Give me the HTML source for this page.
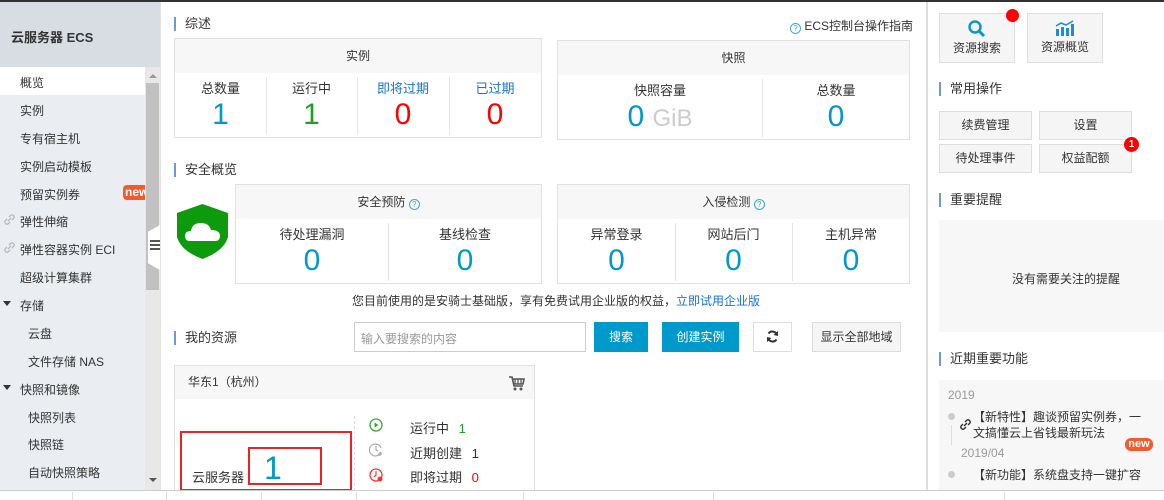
<!DOCTYPE html>
<html><head><meta charset="utf-8"><style>
*{margin:0;padding:0;box-sizing:border-box}
body{width:1164px;height:500px;overflow:hidden;background:#fff;font-family:"Liberation Sans","Noto Sans CJK SC",sans-serif;font-size:12px;color:#333;position:relative}
.a{position:absolute}
.t{position:absolute;white-space:nowrap}
.side{left:0;top:2px;width:160px;height:488px;background:#eaedf1}
.mi{position:absolute;left:20px;font-size:12px;color:#333}
.card{position:absolute;border:1px solid #e1e1e1;background:#fff}
.ch{position:absolute;left:0;right:0;top:0;height:34px;background:#f7f7f7;text-align:center;line-height:34px;color:#333}
.col{position:absolute;text-align:center}
.lab{font-size:13px;color:#333}
.num{font-size:30px;line-height:36px}
.vd{position:absolute;width:1px;background:#e5e5e5}
.sec{position:absolute;font-size:13px;color:#333;padding-left:9px;border-left:2px solid #6a9bd8;line-height:14px}
.btn{position:absolute;border:1px solid #ddd;background:#f5f5f5;text-align:center;color:#333}
.q{display:inline-block;width:11px;height:11px;border:1px solid #3da8d8;border-radius:50%;color:#3da8d8;font-size:8px;line-height:9px;text-align:center;vertical-align:-1px}
</style></head><body>
<div class="a" style="left:0;top:0;width:1164px;height:2px;background:#333"></div>
<div class="a side"></div>
<div class="a" style="left:0;top:2px;width:160px;height:65px;background:#d8dce3"></div>
<div class="t" style="left:11px;top:27px;font-size:13px;font-weight:bold;color:#333">云服务器 ECS</div>
<div class="a" style="left:0;top:67px;width:145px;height:28px;background:#fff"></div>
<div class="a" style="left:145px;top:67px;width:15px;height:423px;background:#e8e8e8"></div>
<div class="a" style="left:146px;top:83px;width:13px;height:207px;background:#c1c1c1"></div>
<div class="a" style="left:149px;top:74px;border:4px solid transparent;border-bottom:4px solid #999;border-top:0"></div>
<div class="a" style="left:149px;top:478px;border:4px solid transparent;border-top:4px solid #555;border-bottom:0"></div>
<div class="a" style="left:148px;top:225px;width:12px;height:45px;background:#fff;clip-path:polygon(0 15%,100% 0,100% 100%,0 85%)"></div>
<div class="a" style="left:150px;top:240px;width:10px;height:2px;background:#555;box-shadow:0 4px 0 #555,0 8px 0 #555"></div>
<div class="mi" style="top:74px">概览</div>
<div class="mi" style="top:102px">实例</div>
<div class="mi" style="top:130px">专有宿主机</div>
<div class="mi" style="top:158px">实例启动模板</div>
<div class="mi" style="top:186px">预留实例券</div>
<div class="a" style="left:123px;top:185px;width:22px;height:15px;background:#f45a2a;border-radius:4px 0 0 4px;color:#fff;font-weight:bold;font-size:12px;line-height:15px;padding-left:2px;overflow:hidden">new</div>
<svg class="a" style="left:4px;top:214px" width="11" height="11" viewBox="0 0 11 11"><path d="M4 7 L7 4 M3 5 L1.5 6.5 Q0 8 1.5 9.5 Q3 11 4.5 9.5 L6 8 M5 3 L6.5 1.5 Q8 0 9.5 1.5 Q11 3 9.5 4.5 L8 6" stroke="#bbb" stroke-width="1.3" fill="none"/></svg>
<div class="mi" style="top:213px">弹性伸缩</div>
<svg class="a" style="left:4px;top:242px" width="11" height="11" viewBox="0 0 11 11"><path d="M4 7 L7 4 M3 5 L1.5 6.5 Q0 8 1.5 9.5 Q3 11 4.5 9.5 L6 8 M5 3 L6.5 1.5 Q8 0 9.5 1.5 Q11 3 9.5 4.5 L8 6" stroke="#bbb" stroke-width="1.3" fill="none"/></svg>
<div class="mi" style="top:241px">弹性容器实例 ECI</div>
<div class="mi" style="top:269px">超级计算集群</div>
<div class="a" style="left:3px;top:301px;border:4px solid transparent;border-top:5px solid #333;border-bottom:0"></div>
<div class="mi" style="top:297px">存储</div>
<div class="mi" style="left:28px;top:325px">云盘</div>
<div class="mi" style="left:28px;top:353px">文件存储 NAS</div>
<div class="a" style="left:3px;top:385px;border:4px solid transparent;border-top:5px solid #333;border-bottom:0"></div>
<div class="mi" style="top:381px">快照和镜像</div>
<div class="mi" style="left:28px;top:409px">快照列表</div>
<div class="mi" style="left:28px;top:436px">快照链</div>
<div class="mi" style="left:28px;top:464px">自动快照策略</div>

<div class="sec" style="left:174px;top:17px">综述</div>
<div class="t" style="left:790px;top:17px;font-size:12px"><span class="q">?</span> ECS控制台操作指南</div>
<div class="card" style="left:174px;top:38px;width:368px;height:100px">
 <div class="ch">实例</div>
 <div class="col" style="left:0;width:91px;top:39px"><div class="lab">总数量</div><div class="num" style="color:#0099cc">1</div></div>
 <div class="vd" style="left:91px;top:38px;height:58px"></div>
 <div class="col" style="left:91px;width:91px;top:39px"><div class="lab">运行中</div><div class="num" style="color:#229e2a">1</div></div>
 <div class="vd" style="left:182px;top:38px;height:58px"></div>
 <div class="col" style="left:182px;width:92px;top:39px"><div class="lab" style="color:#1a73cf">即将过期</div><div class="num" style="color:#f00">0</div></div>
 <div class="vd" style="left:274px;top:38px;height:58px"></div>
 <div class="col" style="left:274px;width:92px;top:39px"><div class="lab" style="color:#1a73cf">已过期</div><div class="num" style="color:#f00">0</div></div>
</div>
<div class="card" style="left:557px;top:40px;width:353px;height:100px">
 <div class="ch">快照</div>
 <div class="col" style="left:0;width:204px;top:39px"><div class="lab">快照容量</div><div class="num" style="color:#0099cc">0 <span style="color:#ccc;font-size:24px">GiB</span></div></div>
 <div class="vd" style="left:204px;top:38px;height:58px"></div>
 <div class="col" style="left:204px;width:148px;top:39px"><div class="lab">总数量</div><div class="num" style="color:#0099cc">0</div></div>
</div>

<div class="sec" style="left:174px;top:163px">安全概览</div>
<svg class="a" style="left:176px;top:203px" width="53" height="57" viewBox="0 0 53 57"><path d="M26.5 1 L52 10 L52 34 Q48 48 26.5 56 Q5 48 1 34 L1 10 Z" fill="#0d9a0d"/><path d="M14 38 Q9 38 9 33 Q9 28 15 28 Q16 20 25 20 Q33 20 35 27 Q44 27 44 33 Q44 38 39 38 Z" fill="#fff"/></svg>
<div class="card" style="left:235px;top:184px;width:307px;height:100px">
 <div class="ch">安全预防 <span class="q">?</span></div>
 <div class="col" style="left:0;width:152px;top:39px"><div class="lab">待处理漏洞</div><div class="num" style="color:#0099cc">0</div></div>
 <div class="vd" style="left:152px;top:38px;height:58px"></div>
 <div class="col" style="left:152px;width:154px;top:39px"><div class="lab">基线检查</div><div class="num" style="color:#0099cc">0</div></div>
</div>
<div class="card" style="left:557px;top:184px;width:353px;height:100px">
 <div class="ch">入侵检测 <span class="q">?</span></div>
 <div class="col" style="left:0;width:117px;top:39px"><div class="lab">异常登录</div><div class="num" style="color:#0099cc">0</div></div>
 <div class="vd" style="left:117px;top:38px;height:58px"></div>
 <div class="col" style="left:117px;width:117px;top:39px"><div class="lab">网站后门</div><div class="num" style="color:#0099cc">0</div></div>
 <div class="vd" style="left:234px;top:38px;height:58px"></div>
 <div class="col" style="left:234px;width:118px;top:39px"><div class="lab">主机异常</div><div class="num" style="color:#0099cc">0</div></div>
</div>
<div class="t" style="left:352px;top:292px;font-size:12px">您目前使用的是安骑士基础版，享有免费试用企业版的权益，<span style="color:#1a73cf">立即试用企业版</span></div>

<div class="sec" style="left:174px;top:331px">我的资源</div>
<div class="a" style="left:354px;top:322px;width:232px;height:30px;border:1px solid #ccc;color:#999;padding:7px 0 0 6px">输入要搜索的内容</div>
<div class="a" style="left:594px;top:322px;width:54px;height:30px;background:#0099cc;color:#fff;text-align:center;line-height:30px">搜索</div>
<div class="a" style="left:662px;top:322px;width:77px;height:30px;background:#0099cc;color:#fff;text-align:center;line-height:30px">创建实例</div>
<div class="a" style="left:753px;top:322px;width:39px;height:30px;border:1px solid #ddd"></div>
<svg class="a" style="left:766px;top:330px" width="13" height="13" viewBox="0 0 13 13"><path d="M11 5 A4.8 4.8 0 0 0 2.5 3.5 M2 8 A4.8 4.8 0 0 0 10.5 9.5" stroke="#333" stroke-width="2" fill="none"/><path d="M12 1 L12 6 L7.5 5 Z M1 12 L1 7 L5.5 8 Z" fill="#333"/></svg>
<div class="a" style="left:812px;top:322px;width:89px;height:30px;border:1px solid #ddd;background:#f5f5f5;text-align:center;line-height:28px">显示全部地域</div>

<div class="card" style="left:174px;top:365px;width:361px;height:130px;border-bottom:none">
 <div class="ch" style="height:33px;text-align:left;padding-left:13px;line-height:33px">华东1（杭州）</div>
 <svg class="a" style="left:334px;top:10px" width="16" height="15" viewBox="0 0 16 15"><path d="M0 1 L3 1 L5 10 L14 10 M3.5 3 L15 3 L14 8 L4.5 8" stroke="#555" stroke-width="1.6" fill="none"/><path d="M6 3 V8 M9 3 V8 M12 3 V8" stroke="#555" stroke-width="1.2"/><circle cx="6" cy="13" r="1.5" fill="#555"/><circle cx="12" cy="13" r="1.5" fill="#555"/></svg>
 <div class="a" style="left:179px;top:50px;width:1px;height:80px;border-left:1px dashed #ddd"></div>
</div>
<div class="a" style="left:180px;top:431px;width:172px;height:60px;border:2px solid #e22"></div>
<div class="a" style="left:248px;top:447px;width:74px;height:38px;border:2px solid #e22"></div>
<div class="t" style="left:192px;top:467px;font-size:13px">云服务器</div>
<div class="t" style="left:264px;top:448px;font-size:32px;color:#0099cc;line-height:40px">1</div>
<svg class="a" style="left:369px;top:418px" width="14" height="14" viewBox="0 0 14 14"><circle cx="7" cy="7" r="6" stroke="#3aa53a" stroke-width="1.3" fill="none"/><path d="M5.5 4.5 L9.5 7 L5.5 9.5 Z" fill="#3aa53a"/></svg>
<svg class="a" style="left:369px;top:443px" width="14" height="14" viewBox="0 0 14 14"><path d="M12 9 A6 6 0 1 1 12 5" stroke="#aaa" stroke-width="1.2" fill="none"/><path d="M7 3 V7 L9 8 M11 9 V13 M9 11 H13" stroke="#aaa" stroke-width="1.2" fill="none"/></svg>
<svg class="a" style="left:369px;top:468px" width="14" height="14" viewBox="0 0 14 14"><circle cx="7" cy="7" r="6" stroke="#f33" stroke-width="1.3" fill="none"/><path d="M7 3 V7 L5 9" stroke="#f33" stroke-width="1.2" fill="none"/><circle cx="11" cy="11" r="2.5" fill="#f33"/></svg>
<div class="t" style="left:410px;top:418px;font-size:13px">运行中 <span style="color:#229e2a;margin-left:6px">1</span></div>
<div class="t" style="left:410px;top:443px;font-size:13px">近期创建 <span style="margin-left:6px">1</span></div>
<div class="t" style="left:410px;top:467px;font-size:13px">即将过期 <span style="color:#f00;margin-left:6px">0</span></div>

<div class="a" style="left:160px;top:2px;width:1px;height:488px;background:#e2e2e2"></div>
<div class="a" style="left:926px;top:2px;width:2px;height:488px;background:#ddd"></div>

<div class="btn" style="left:939px;top:13px;width:76px;height:50px"><svg style="display:block;margin:5px auto 0" width="20" height="20" viewBox="0 0 20 20"><circle cx="8" cy="8" r="5.5" stroke="#0a9ad0" stroke-width="2.5" fill="none"/><path d="M12 12 L17 17" stroke="#0a9ad0" stroke-width="3"/></svg><div>资源搜索</div></div>
<div class="a" style="left:1006px;top:9px;width:13px;height:13px;border-radius:50%;background:#f00"></div>
<div class="btn" style="left:1027px;top:13px;width:76px;height:50px"><svg style="display:block;margin:6px auto 0" width="20" height="16" viewBox="0 0 20 16"><path d="M1 16 V9 H4 V16 Z M6 16 V7 H9 V16 Z M11 16 V8 H14 V16 Z M16 16 V4 H19 V16 Z" fill="#1a8fd0"/><path d="M1 6 L6 3 L11 5 L18 1" stroke="#1a8fd0" stroke-width="1.5" fill="none"/></svg><div style="margin-top:2px">资源概览</div></div>
<div class="sec" style="left:939px;top:82px">常用操作</div>
<div class="btn" style="left:939px;top:111px;width:93px;height:29px;line-height:27px">续费管理</div>
<div class="btn" style="left:1039px;top:111px;width:93px;height:29px;line-height:27px">设置</div>
<div class="btn" style="left:939px;top:144px;width:93px;height:29px;line-height:27px">待处理事件</div>
<div class="btn" style="left:1039px;top:144px;width:93px;height:29px;line-height:27px">权益配额</div>
<div class="a" style="left:1124px;top:137px;width:15px;height:15px;border-radius:50%;background:#f00;color:#fff;font-size:10px;font-weight:bold;text-align:center;line-height:15px">1</div>
<div class="sec" style="left:939px;top:193px">重要提醒</div>
<div class="a" style="left:939px;top:220px;width:225px;height:112px;background:#f7f7f7"></div>
<div class="t" style="left:1012px;top:270px">没有需要关注的提醒</div>
<div class="sec" style="left:939px;top:352px">近期重要功能</div>
<div class="a" style="left:939px;top:380px;width:225px;height:110px;background:#f7f7f7"></div>
<div class="t" style="left:948px;top:388px;color:#999;font-size:12px">2019</div>
<div class="a" style="left:948px;top:413px;width:7px;height:7px;border-radius:50%;background:#ccc"></div>
<div class="a" style="left:951px;top:425px;width:1px;height:20px;background:#ddd"></div>
<svg class="a" style="left:960px;top:419px" width="11" height="11" viewBox="0 0 11 11"><path d="M4 7 L7 4 M3 5 L1.5 6.5 Q0 8 1.5 9.5 Q3 11 4.5 9.5 L6 8 M5 3 L6.5 1.5 Q8 0 9.5 1.5 Q11 3 9.5 4.5 L8 6" stroke="#333" stroke-width="1.4" fill="none"/></svg>
<div class="t" style="left:973px;top:409px;line-height:16px">【新特性】趣谈预留实例券，一<br>文搞懂云上省钱最新玩法</div>
<div class="a" style="left:1125px;top:438px;width:28px;height:13px;background:#f45a2a;border-radius:6px;color:#fff;font-weight:bold;font-size:11px;line-height:13px;text-align:center">new</div>
<div class="t" style="left:961px;top:446px;color:#999">2019/04</div>
<div class="a" style="left:948px;top:471px;width:7px;height:7px;border-radius:50%;background:#ccc"></div>
<div class="t" style="left:973px;top:467px;line-height:16px">【新功能】系统盘支持一键扩容</div>

<div class="a" style="left:0;top:490px;width:1164px;height:10px;background:#fff;border-top:1px solid #ccc"></div>
<div class="a" style="left:72px;top:492px;width:1px;height:8px;background:#ddd"></div>
<div class="a" style="left:166px;top:492px;width:1px;height:8px;background:#ddd"></div>
<div class="a" style="left:261px;top:492px;width:1px;height:8px;background:#ddd"></div>
<div class="a" style="left:356px;top:492px;width:1px;height:8px;background:#ddd"></div>
<div class="a" style="left:523px;top:492px;width:1px;height:8px;background:#ddd"></div>
<div class="a" style="left:713px;top:492px;width:1px;height:8px;background:#ddd"></div>
<div class="a" style="left:1004px;top:492px;width:1px;height:8px;background:#ddd"></div>
</body></html>
